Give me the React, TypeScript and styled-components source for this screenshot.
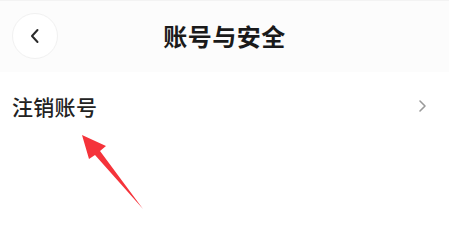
import React from "react";
import styled, { createGlobalStyle } from "styled-components";

const Global = createGlobalStyle`
  html, body { margin: 0; padding: 0; background: #ffffff; }
  body { font-family: "Noto Sans CJK SC", "Noto Sans", sans-serif; }
`;

const Page = styled.div`
  position: relative;
  width: 449px;
  height: 226px;
  background: #ffffff;
  overflow: hidden;
`;

const Header = styled.div`
  height: 72px;
  background: #fcfcfc;
  border-top: 1px solid #f3f3f3;
  box-sizing: border-box;
  display: grid;
  grid-template-columns: 70px 1fr 70px;
  align-items: center;
`;

const BackButton = styled.div`
  width: 46px;
  height: 46px;
  margin-left: 12px;
  margin-top: -2px;
  border-radius: 50%;
  background: #ffffff;
  border: 1px solid #f1f1f1;
  box-sizing: border-box;
  display: flex;
  align-items: center;
  justify-content: center;
`;

const Title = styled.div`
  text-align: center;
  font-size: 24px;
  font-weight: 700;
  color: #1a1a1a;
  margin-top: -3px;
  letter-spacing: 0.5px;
`;

const Row = styled.div`
  height: 70px;
  display: flex;
  align-items: center;
  justify-content: space-between;
  padding: 0 22px 0 12px;
  margin-top: -1px;
`;

const RowLabel = styled.div`
  font-size: 21px;
  font-weight: 500;
  color: #222222;
  letter-spacing: 0.3px;
`;

const Arrow = styled.svg`
  position: absolute;
  left: 0;
  top: 0;
`;

export default function App() {
  return (
    <>
      <Global />
      <Page>
        <Header>
          <BackButton>
            <svg width="12" height="16" viewBox="0 0 12 16">
              <path d="M8.5 2 L3 8 L8.5 14" fill="none" stroke="#2a2a2a" strokeWidth="2" strokeLinecap="round" strokeLinejoin="round" />
            </svg>
          </BackButton>
          <Title>账号与安全</Title>
          <div />
        </Header>
        <Row>
          <RowLabel>注销账号</RowLabel>
          <svg width="10" height="14" viewBox="0 0 10 14">
            <path d="M3 2 L8 7 L3 12" fill="none" stroke="#9a9a9a" strokeWidth="1.6" strokeLinecap="round" strokeLinejoin="round" />
          </svg>
        </Row>
        <Arrow width="449" height="226" viewBox="0 0 449 226">
          <polygon points="82,135 106,146 100,151 143,209 95,155 89,159" fill="#f5333a" />
        </Arrow>
      </Page>
    </>
  );
}
